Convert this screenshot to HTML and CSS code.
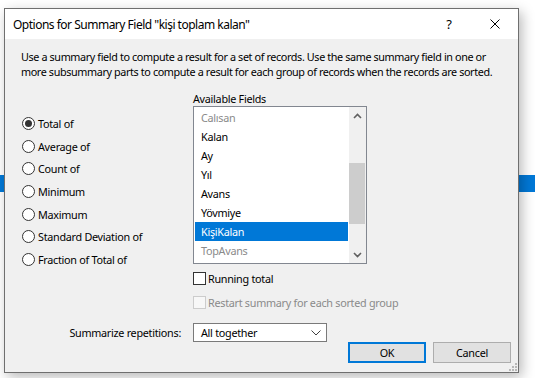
FILE: index.html
```html
<!DOCTYPE html>
<html>
<head>
<meta charset="utf-8">
<link rel="stylesheet" href="styles.css">
</head>
<body>
<div class="desktop">
  <div class="under">
    <div class="under-bar"></div>
  </div>

  <div class="dialog">
    <div class="titlebar">
      <div class="title">Options for Summary Field "kişi toplam kalan"</div>
      <div class="tb-btn">?</div>
      <div class="tb-btn">
        <svg width="10" height="10" viewBox="0 0 10 10"><path d="M0.5 0.5 L9.5 9.5 M9.5 0.5 L0.5 9.5" stroke="#000" stroke-width="1" fill="none"/></svg>
      </div>
    </div>
    <div class="body">
      <p class="desc">Use a summary field to compute a result for a set of records. Use the same summary field in one or more subsummary parts to compute a result for each group of records when the records are sorted.</p>

      <div class="content">
        <div class="radios">
          <div class="radio-row"><span class="radio checked"></span>Total of</div>
          <div class="radio-row"><span class="radio"></span>Average of</div>
          <div class="radio-row"><span class="radio"></span>Count of</div>
          <div class="radio-row"><span class="radio"></span>Minimum</div>
          <div class="radio-row"><span class="radio"></span>Maximum</div>
          <div class="radio-row"><span class="radio"></span>Standard Deviation of</div>
          <div class="radio-row"><span class="radio"></span>Fraction of Total of</div>
        </div>

        <div class="fields">
          <div class="fields-label">Available Fields</div>
          <div class="listbox">
            <div class="items">
              <div class="item dim">Calısan</div>
              <div class="item">Kalan</div>
              <div class="item">Ay</div>
              <div class="item">Yıl</div>
              <div class="item">Avans</div>
              <div class="item">Yövmiye</div>
              <div class="item selected">KişiKalan</div>
              <div class="item dim">TopAvans</div>
            </div>
            <div class="scrollbar">
              <div class="sb-btn">
                <svg width="9" height="6" viewBox="0 0 9 6"><path d="M1 5 L4.5 1.5 L8 5" stroke="#606060" stroke-width="1.6" fill="none"/></svg>
              </div>
              <div class="sb-track"><div class="sb-thumb"></div></div>
              <div class="sb-btn">
                <svg width="9" height="6" viewBox="0 0 9 6"><path d="M1 1 L4.5 4.5 L8 1" stroke="#606060" stroke-width="1.6" fill="none"/></svg>
              </div>
            </div>
          </div>
          <div class="check-row first"><span class="checkbox"></span>Running total</div>
          <div class="check-row disabled"><span class="checkbox"></span>Restart summary for each sorted group</div>
        </div>

        <div class="rep-label">Summarize repetitions:</div>
        <div class="select">
          <span class="select-text">All together</span>
          <svg width="10" height="6" viewBox="0 0 10 6"><path d="M0.5 0.5 L5 5 L9.5 0.5" stroke="#404040" stroke-width="1" fill="none"/></svg>
        </div>
      </div>

      <div class="buttons">
        <div class="btn default">OK</div>
        <div class="btn">Cancel</div>
      </div>
      <svg class="grip" width="8" height="8" viewBox="0 0 8 8">
        <rect x="6" y="0" width="2" height="2" fill="#b8b8b8"/>
        <rect x="3" y="3" width="2" height="2" fill="#b8b8b8"/>
        <rect x="6" y="3" width="2" height="2" fill="#b8b8b8"/>
        <rect x="0" y="6" width="2" height="2" fill="#b8b8b8"/>
        <rect x="3" y="6" width="2" height="2" fill="#b8b8b8"/>
        <rect x="6" y="6" width="2" height="2" fill="#b8b8b8"/>
      </svg>
    </div>
  </div>
</div>
</body>
</html>
```
FILE: styles.css
```css
html, body {
  margin: 0;
  padding: 0;
}
body {
  width: 535px;
  height: 378px;
  overflow: hidden;
  background: #ffffff;
  font-family: "Noto Sans", "Open Sans", sans-serif;
  font-size: 10.8px;
  letter-spacing: -0.28px;
  color: #000;
}
.desktop {
  position: relative;
  width: 535px;
  height: 378px;
}
.under {
  position: absolute;
  inset: 0;
}
.under-bar {
  position: absolute;
  left: 0;
  right: 0;
  top: 175px;
  height: 17px;
  background: #0078d7;
}

.dialog {
  position: absolute;
  left: 4px;
  top: 8px;
  width: 513px;
  height: 363px;
  border: 1px solid #6f6f6f;
  background: #f0f0f0;
  box-shadow: 3px 4px 12px rgba(0, 0, 0, 0.28);
  display: flex;
  flex-direction: column;
}
.titlebar {
  height: 30px;
  background: #fff;
  display: flex;
  align-items: center;
  padding-left: 8px;
}
.title {
  flex: 1;
  font-size: 12px;
  letter-spacing: -0.5px;
}
.tb-btn {
  width: 46px;
  height: 30px;
  display: flex;
  align-items: center;
  justify-content: center;
  font-size: 13px;
}
.body {
  position: relative;
  flex: 1;
}
.desc {
  margin: 0;
  padding: 10px 16px 0 16px;
  line-height: 15px;
  letter-spacing: -0.38px;
}
.content {
  display: grid;
  grid-template-columns: 172px 174px;
  padding-left: 16px;
  margin-top: 13px;
}
.radios {
  padding-top: 20px;
}
.radio-row {
  height: 22.7px;
  display: flex;
  align-items: center;
  gap: 3px;
}
.radio {
  width: 11px;
  height: 11px;
  border: 1px solid #333;
  border-radius: 50%;
  background: #fff;
  display: inline-flex;
  align-items: center;
  justify-content: center;
  margin-left: 1px;
}
.radio.checked::after {
  content: "";
  width: 7px;
  height: 7px;
  border-radius: 50%;
  background: #333;
}
.fields-label {
  line-height: 14px;
}
.listbox {
  width: 172px;
  height: 156px;
  border: 1px solid #828790;
  background: #fff;
  display: flex;
}
.items {
  flex: 1;
  padding: 1px;
}
.item {
  height: 19px;
  line-height: 19px;
  padding-left: 6px;
}
.item.dim { color: #8a8a8a; }
.item.selected {
  background: #0078d7;
  color: #fff;
}
.scrollbar {
  width: 17px;
  background: #f0f0f0;
  display: flex;
  flex-direction: column;
}
.sb-btn {
  height: 17px;
  display: flex;
  align-items: center;
  justify-content: center;
}
.sb-track {
  flex: 1;
  padding-top: 39px;
}
.sb-thumb {
  height: 61px;
  margin-right: 1px;
  background: #cdcdcd;
}
.check-row {
  height: 24px;
  display: flex;
  align-items: center;
  gap: 2px;
  white-space: nowrap;
}
.check-row.first { margin-top: 2px; }
.checkbox {
  flex: none;
  width: 11px;
  height: 11px;
  border: 1px solid #333;
  background: #fff;
}
.check-row.disabled { color: #8a8a8a; }
.check-row.disabled .checkbox {
  border-color: #cccccc;
  background: #f7f7f7;
}
.rep-label {
  text-align: right;
  padding-right: 12px;
  align-self: center;
  margin-top: 9px;
}
.select {
  margin-top: 9px;
  height: 17px;
  width: 120px;
  border: 1px solid #7a7a7a;
  background: #fff;
  display: flex;
  align-items: center;
  justify-content: space-between;
  padding: 0 5px 0 7px;
}
.buttons {
  display: flex;
  justify-content: flex-end;
  gap: 7px;
  padding-right: 7px;
}
.btn {
  width: 76px;
  height: 19px;
  border: 1px solid #adadad;
  background: #e1e1e1;
  display: flex;
  align-items: center;
  justify-content: center;
}
.btn.default {
  border: 2px solid #0078d7;
  width: 74px;
  height: 17px;
}
.grip {
  position: absolute;
  right: 1px;
  bottom: 1px;
}
```
